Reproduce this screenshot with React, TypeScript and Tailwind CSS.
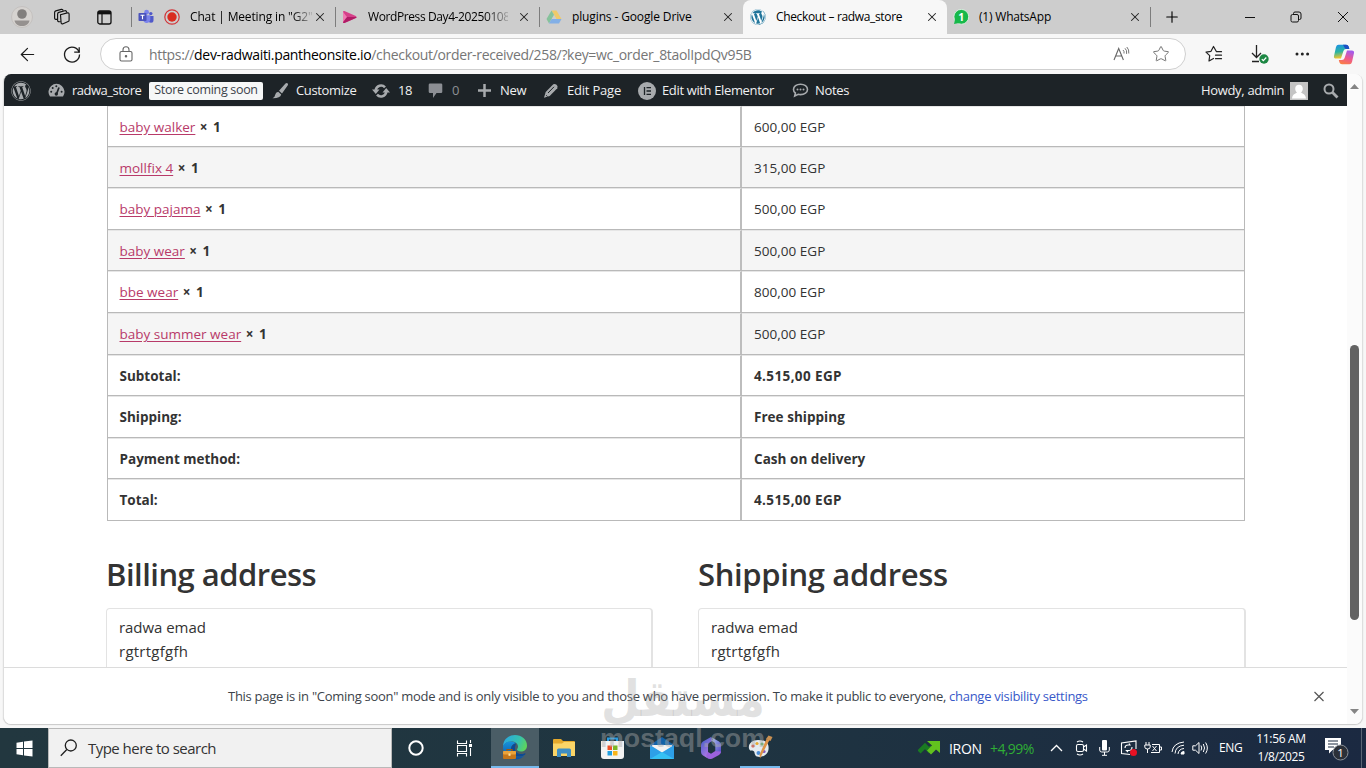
import type { ReactNode } from "react";
import { FaWordpress } from "react-icons/fa";
import { Star, X, Plus, ArrowLeft } from "lucide-react";

const products = [
  { name: "baby walker", price: "600,00 EGP", h: "h-[41px]", bg: "bg-white" },
  { name: "mollfix 4", price: "315,00 EGP", h: "h-[41px]", bg: "bg-[#f5f5f5]" },
  { name: "baby pajama", price: "500,00 EGP", h: "h-[42px]", bg: "bg-white" },
  { name: "baby wear", price: "500,00 EGP", h: "h-[41px]", bg: "bg-[#f5f5f5]" },
  { name: "bbe wear", price: "800,00 EGP", h: "h-[42px]", bg: "bg-white" },
  { name: "baby summer wear", price: "500,00 EGP", h: "h-[42px]", bg: "bg-[#f5f5f5]" },
];

const totals = [
  { label: "Subtotal:", value: "4.515,00 EGP", h: "h-[41px]", spacing: "tracking-[0.38px]" },
  { label: "Shipping:", value: "Free shipping", h: "h-[42px]", spacing: "tracking-[0.03px]" },
  { label: "Payment method:", value: "Cash on delivery", h: "h-[41px]", spacing: "tracking-[0.03px]" },
  { label: "Total:", value: "4.515,00 EGP", h: "h-[42px]", spacing: "tracking-[0.38px]" },
];

const TeamsIcon = () => (
  <svg width="16" height="16" viewBox="0 0 16 16">
    <circle cx="12.8" cy="4.6" r="1.7" fill="#5059c9" />
    <circle cx="8.6" cy="3.2" r="2.4" fill="#7b83eb" />
    <path d="M10.5 7h5v4.2a2.5 2.5 0 0 1-5 0z" fill="#5059c9" />
    <path d="M5 6.2h7.3v4.6a3.7 3.7 0 0 1-7.3 0z" fill="#7b83eb" />
    <rect x="0.5" y="4" width="8" height="8" rx="0.8" fill="#4b53bc" />
    <path d="M2.5 6.2h4M4.5 6.2v4" stroke="#fff" strokeWidth="1.1" />
  </svg>
);

const RecordIcon = () => (
  <svg width="16" height="16" viewBox="0 0 16 16">
    <circle cx="8" cy="8" r="7.2" fill="none" stroke="#d13438" strokeWidth="1.2" />
    <circle cx="8" cy="8" r="4.7" fill="#d92c20" />
  </svg>
);

const StreamIcon = () => (
  <svg width="16" height="16" viewBox="0 0 16 16">
    <path d="M1 3Q1 1.600 2.400 2L13.800 6.900Q15.500 8 13.800 9.100L2.400 14Q1 14.400 1 13L3 8z" fill="#d6408a" />
    <path d="M1 13L3 8h11.700q0 .6-.9 1.100L2.400 14Q1 14.400 1 13z" fill="#b01c66" />
    <path d="M1 3v10L5 8z" fill="#f07ab2" />
  </svg>
);

const DriveIcon = () => (
  <svg width="16" height="16" viewBox="0 0 16 16" opacity="0.75">
    <path d="M5.5 1.5h5L15.5 10h-5z" fill="#fbc94a" />
    <path d="M5.5 1.5L8 5.8 3 14.5.5 10z" fill="#6fbf8b" />
    <path d="M5.5 10h10L13 14.5H3z" fill="#6aa5ef" />
  </svg>
);

const WhatsAppIcon = () => (
  <svg width="16" height="16" viewBox="0 0 16 16">
    <circle cx="8.3" cy="7.8" r="7.4" fill="#17b84a" stroke="#e7f6ea" strokeWidth="0.8" />
    <path d="M1 15l1.2-5L6 14z" fill="#17b84a" />
    <text x="8.3" y="11.8" fontSize="10.5" fontWeight="700" fontFamily="Open Sans, sans-serif" textAnchor="middle" fill="#fff">1</text>
  </svg>
);

const CopilotIcon = () => (
  <svg width="22" height="21" viewBox="0 0 22 21">
    <defs>
      <linearGradient id="cpA" x1="0" y1="0" x2="0.2" y2="1">
        <stop offset="0" stopColor="#1a8fe8" />
        <stop offset="0.55" stopColor="#2cb5a0" />
        <stop offset="1" stopColor="#f4c52c" />
      </linearGradient>
      <linearGradient id="cpB" x1="0.6" y1="0" x2="0.2" y2="1">
        <stop offset="0" stopColor="#a45bea" />
        <stop offset="0.5" stopColor="#ee5a8d" />
        <stop offset="1" stopColor="#fb8040" />
      </linearGradient>
    </defs>
    <path d="M5.5.8H13q2 0 2.600 2L16.200 5H13q-2 0-2.600 2L8 14.500H3.200q-2.700 0-2.200-2.600L3 3Q3.600.8 5.500.8z" fill="url(#cpA)" />
    <path d="M10 .8h3.200q2 0 2.600 2L16.400 5h-2.600q-2 0-2.300-1.500z" fill="#1c4fc4" />
    <path d="M16.500 20.200H9q-2 0-2.600-2L5.800 16H9q2 0 2.600-2L14 6.500h4.800q2.700 0 2.200 2.600L19 18q-.6 2.200-2.500 2.200z" fill="url(#cpB)" />
  </svg>
);

const EdgeIcon = () => (
  <svg width="26" height="26" viewBox="0 0 26 26">
    <defs>
      <linearGradient id="edA" x1="0" y1="0.3" x2="1" y2="0.6">
        <stop offset="0" stopColor="#2aa8e0" />
        <stop offset="0.6" stopColor="#35c1b0" />
        <stop offset="1" stopColor="#5fd65a" />
      </linearGradient>
      <linearGradient id="edB" x1="0" y1="0" x2="0" y2="1">
        <stop offset="0" stopColor="#1793dc" />
        <stop offset="1" stopColor="#0e4f9e" />
      </linearGradient>
    </defs>
    <path d="M1 13C1 5.500 6.500 1 13 1s12 4.600 12 10.400c0 4-3 6-6 6-2.500 0-4-.9-4-1.800 0-.7 1-1 1-3.100C16 9.500 13 7.500 9.500 7.500 5 7.500 1.600 10 1 13z" fill="url(#edA)" />
    <path d="M1 13c.5-3.500 4-5.500 8-5.500 2 0 4 .8 5 2-3 0-5 2.500-5 5.500 0 5 5 8.500 10 7.500 1.500-.3 3-1 3.700-1.300C20.500 24 17 25.500 13 25.500 6 25.500 1 20 1 13z" fill="url(#edB)" />
    <path d="M9 15c0 4.500 4 7.500 8.500 7.500 2.500 0 5-1.200 5.800-2.200.4-.6-.1-1.200-.8-.9-4.500 1.800-9.500-.5-9.500-5 0-1.500.5-3 1-4.900C11.500 9.500 9 12 9 15z" fill="#0b4a94" />
    <rect x="1" y="17" width="13" height="8" rx="1" fill="#c5761a" />
    <rect x="1" y="17" width="13" height="3.600" rx="1" fill="#e9a23b" />
    <path d="M5 17v-1.500h5V17" fill="none" stroke="#9c5710" strokeWidth="1.200" />
    <rect x="6.500" y="19.500" width="2" height="2.300" fill="#ffe3a0" />
  </svg>
);

const Close = () => <X size={14} strokeWidth={1.800} className="shrink-0 text-[#222]" />;

type TabProps = { icon: ReactNode; title: string; textClass: string };

const Tab = ({ icon, title, textClass }: TabProps) => (
  <div className="flex h-[34px] w-[204px] shrink-0 items-center">
    {icon}
    <span className={`min-w-0 flex-1 text-[12px] whitespace-nowrap ${textClass}`}>{title}</span>
    <div className="flex w-[32px] shrink-0 justify-center">
      <Close />
    </div>
  </div>
);

const Sep = () => <div className="-ml-px h-5 w-px shrink-0 bg-[#7d7d7d]" />;

const TabBar = () => (
  <div className="flex h-[34px] items-center bg-[#cdcdcd] text-black">
    <div className="flex w-[132px] shrink-0 items-center pl-[11px]">
      <svg width="22" height="22" viewBox="0 0 22 22">
        <circle cx="11" cy="11" r="10.500" fill="#d6d3d0" stroke="#bebab7" strokeWidth="0.7" />
        <circle cx="11" cy="8" r="4.800" fill="#827f7d" />
        <path d="M3.500 14.500h15c-.5 3.500-3.500 5.500-7.500 5.500s-7-2-7.500-5.500z" fill="#95918f" />
      </svg>
      <svg className="ml-[20px]" width="18" height="18" viewBox="0 0 18 18" fill="none" stroke="#111" strokeWidth="1.150">
        <path d="M7.500 6.800l6.800-1.900q1.700-.3 1.800 1.300v6q0 1-1 1.300l-5 2.200q-1.800.7-2-1z" />
        <path d="M7.600 13.500q-3 .8-3-1.200V6q0-1.200 1.200-1.600l6-1.700q1.500-.3 2 1.800" />
        <path d="M4.600 11.200q-3 .8-3-1.200V4.500q0-1.200 1.200-1.600l5.500-1.500q1.500-.3 2 1.200" />
      </svg>
      <svg className="ml-[26px]" width="15" height="15" viewBox="0 0 15 15" fill="none" stroke="#111">
        <rect x="0.800" y="0.800" width="13.200" height="13.200" rx="2" strokeWidth="1.300" />
        <path d="M1 2.700h13" strokeWidth="3.300" />
        <path d="M5 3v11" strokeWidth="1.200" />
      </svg>
    </div>
    <Sep />
    <div className="flex w-[204px] shrink-0 items-center pl-[6px]">
      <TeamsIcon />
      <span className="ml-[10px]"><RecordIcon /></span>
      <span className="ml-[10px] w-[123px] shrink-0 bg-linear-to-r from-black from-80% to-[#bbb] bg-clip-text text-[12px] tracking-[-0.15px] whitespace-nowrap text-transparent">Chat | Meeting in "G2"</span>
      <Close />
    </div>
    <Sep />
    <Tab
      icon={<span className="ml-[6px]"><StreamIcon /></span>}
      title="WordPress Day4-20250108"
      textClass="ml-[10px] tracking-[-0.4px] bg-linear-to-r from-black from-80% to-[#aaa] bg-clip-text text-transparent"
    />
    <Sep />
    <Tab icon={<span className="ml-[6px]"><DriveIcon /></span>} title="plugins - Google Drive" textClass="ml-[10px] tracking-[-0.13px]" />
    <div className="-ml-px flex h-[34px] w-[204px] shrink-0 items-center rounded-t-lg bg-[#f7f7f7]">
      <span className="ml-[7px] flex size-4 items-center justify-center rounded-full bg-white">
        <FaWordpress size={16} color="#21759b" />
      </span>
      <span className="ml-[10px] flex-1 text-[12px] tracking-[-0.35px] whitespace-nowrap">Checkout – radwa_store</span>
      <div className="flex w-[31px] justify-center"><Close /></div>
    </div>
    <Tab icon={<span className="ml-[6px]"><WhatsAppIcon /></span>} title="(1) WhatsApp" textClass="ml-[10px] tracking-[-0.2px]" />
    <Sep />
    <div className="flex flex-1 items-center pl-[12px]">
      <Plus size={18} strokeWidth={1.500} />
      <svg className="ml-[64px]" width="10" height="10"><path d="M0 5.500h10" stroke="#111" /></svg>
      <svg className="ml-[35px]" width="12" height="12" viewBox="0 0 12 12" fill="none" stroke="#111">
        <rect x="1" y="3.500" width="7.500" height="7.500" rx="1.500" />
        <path d="M3.500 3V2.500q0-1.500 1.500-1.500h4q2 0 2 2v4q0 1.500-1.500 1.500H9" />
      </svg>
      <svg className="ml-[35px]" width="12" height="12"><path d="M1 1l10 10M11 1L1 11" stroke="#111" /></svg>
    </div>
  </div>
);

const Toolbar = () => (
  <div className="flex h-10 items-center bg-[#f7f7f7]">
    <div className="flex w-[100px] shrink-0 items-center pl-[17px] text-[#1b1b1b]">
      <ArrowLeft size={21} strokeWidth={1.400} />
      <svg className="ml-[24px]" width="20" height="20" viewBox="0 0 20 20" fill="none" stroke="#1b1b1b" strokeWidth="1.300">
        <path d="M17.200 8.500A7.500 7.500 0 1 0 17.500 10.500" />
        <path d="M17.200 3.200v5h-5" />
      </svg>
    </div>
    <div className="flex h-8 w-[1086px] shrink-0 items-center rounded-full border border-[#cfcfcf] bg-white pl-[18px]">
      <svg width="14" height="16" viewBox="0 0 14 16" fill="none" stroke="#666" strokeWidth="1.100">
        <rect x="1" y="5.500" width="12" height="9.500" rx="1.500" />
        <path d="M4 5.500V3.700a3 3 0 0 1 6 0v1.800" />
        <circle cx="7" cy="10.200" r="0.700" fill="#666" />
      </svg>
      <span className="ml-[16px] w-[960px] text-[14px] tracking-[-0.33px] whitespace-nowrap text-[#767676]">
        https://<span className="text-black">dev-radwaiti.pantheonsite.io</span>/checkout/order-received/258/?key=wc_order_8taolIpdQv95B
      </span>
      <svg className="ml-[4px]" width="17" height="16" viewBox="0 0 17 16" fill="none" stroke="#666" strokeWidth="1.100">
        <path d="M1 14L5.700 2.500 10.400 14M2.600 10h6.200" />
        <path d="M10 4q1.500 1.200 1 3.500M12 2.300q2.200 2 1.600 5.600M13.800 1q2.500 2.500 2 6.500" strokeWidth="0.900" />
      </svg>
      <Star size={18} strokeWidth={1.200} className="ml-[22px] text-[#666]" />
    </div>
    <svg className="ml-[19px] shrink-0" width="18" height="18" viewBox="0 0 18 18" fill="none" stroke="#222" strokeWidth="1.200" strokeLinejoin="round" strokeLinecap="round">
      <path d="M16.500 6.700h-5L8.500 1.500 6 6.300l-5 .8 3.700 3.500L4 16l4.500-2.500M10.500 10.200h6M10.500 13.700h6" />
    </svg>
    <svg className="ml-[28px] shrink-0" width="20" height="20" viewBox="0 0 20 20" fill="none">
      <path d="M5.500 1v12M1 9l4.500 4.500L10 9M1 17.500h7" stroke="#222" strokeWidth="1.300" />
      <circle cx="13" cy="15" r="4.700" fill="#1c8743" />
      <path d="M10.800 15.200l1.500 1.500 3-3.200" stroke="#fff" strokeWidth="1.200" />
    </svg>
    <svg className="ml-[24px] shrink-0" width="15" height="4" fill="#222">
      <circle cx="2" cy="2" r="1.500" /><circle cx="7.300" cy="2" r="1.500" /><circle cx="12.600" cy="2" r="1.500" />
    </svg>
    <span className="ml-[23px] shrink-0"><CopilotIcon /></span>
  </div>
);

const AdminBar = () => (
  <div className="flex h-8 w-[1343px] items-center bg-[#1d2327] pt-px text-[13px] whitespace-nowrap text-[#f0f0f1]">
    <div className="flex w-[40px] shrink-0 pl-[7px]"><FaWordpress size={20} color="#a7aaad" /></div>
    <div className="flex w-[28px] shrink-0 pl-[4px]">
      <svg width="17" height="17" viewBox="0 0 17 17">
        <path d="M2 14.500A8 8 0 1 1 15 14.500z" fill="#a7aaad" />
        <path d="M8.500 12L11 5.500" stroke="#1d2327" strokeWidth="1.700" />
        <circle cx="8.300" cy="12" r="1.700" fill="#1d2327" />
        <g fill="#1d2327">
          <circle cx="3.200" cy="9.800" r="1" /><circle cx="4.700" cy="6" r="1" /><circle cx="8.300" cy="4.200" r="1" /><circle cx="13.600" cy="9.800" r="1" />
        </g>
      </svg>
    </div>
    <span className="w-[77px] shrink-0 tracking-[-0.5px]">radwa_store</span>
    <div className="flex h-[18px] w-[114px] shrink-0 items-center justify-center rounded-[2px] bg-[#f6f7f7] text-[12.500px] tracking-[-0.32px] text-[#3c434a]">Store coming soon</div>
    <div className="flex w-[33px] shrink-0 pl-[8px]">
      <svg width="18" height="18" viewBox="0 0 18 18" fill="#a7aaad">
        <path d="M16.500 1.200q1 .8.3 2L11 11.500 8 8.800l6.500-7.300q1-1 2-.3zM7.200 9.700l3 2.700q-1 4-8.700 3.800 2.500-1.200 2.700-3.500.4-2.500 3-3z" />
      </svg>
    </div>
    <span className="w-[76px] shrink-0 tracking-[-0.35px]">Customize</span>
    <div className="flex w-[26px] shrink-0">
      <svg width="18" height="16" viewBox="0 0 18 16" fill="none" stroke="#a7aaad" strokeWidth="2.600">
        <path d="M3.700 7A5.400 5.400 0 0 1 13 4.300M14.300 9A5.400 5.400 0 0 1 5 11.700" />
        <path d="M0 6.500h7.500L3.800 11zM18 9.500h-7.500L14.200 5z" fill="#a7aaad" stroke="none" />
      </svg>
    </div>
    <span className="w-[30px] shrink-0 tracking-[-0.5px]">18</span>
    <div className="flex w-[24px] shrink-0">
      <svg width="15" height="17" viewBox="0 0 15 17"><path d="M2 1.500h11q1.300 0 1.300 1.300v7q0 1.200-1.300 1.200H8.500L5 16v-5H2Q.7 11 .7 9.800v-7Q.7 1.500 2 1.500z" fill="#8c8f94" /></svg>
    </div>
    <span className="w-[25px] shrink-0 text-[#8c8f94]">0</span>
    <div className="flex w-[23px] shrink-0">
      <svg width="15" height="15"><path d="M7.500 1v13M1 7.500h13" stroke="#a7aaad" strokeWidth="2.500" /></svg>
    </div>
    <span className="w-[43px] shrink-0 tracking-[-0.3px]">New</span>
    <div className="flex w-[24px] shrink-0">
      <svg width="16" height="16" viewBox="0 0 16 16" fill="#a7aaad">
        <path d="M10.300 1.300q1.500-1 3.200.5t.8 3.400L6.700 13 1 14.800 2.700 9z" />
        <path d="M5 10l6-6.200M3.200 12.300l1.300 1.200" stroke="#1d2327" strokeWidth="1" />
      </svg>
    </div>
    <span className="w-[71px] shrink-0 tracking-[-0.2px]">Edit Page</span>
    <div className="flex w-[24px] shrink-0">
      <svg width="18" height="18" viewBox="0 0 18 18">
        <circle cx="9" cy="9" r="9" fill="#a7aaad" />
        <path d="M6.500 5v8M8.500 5.700H13M8.500 9H13M8.500 12.300H13" stroke="#1d2327" strokeWidth="1.300" />
      </svg>
    </div>
    <span className="w-[130px] shrink-0 tracking-[-0.36px]">Edit with Elementor</span>
    <div className="flex w-[23px] shrink-0">
      <svg width="17" height="15" viewBox="0 0 17 15">
        <path d="M8.500 1.200c4 0 7 2.200 7 5.200s-3 5.200-7 5.200q-1.200 0-2.300-.3L2.700 13l.7-3Q1.500 8.600 1.500 6.400c0-3 3-5.200 7-5.200z" fill="none" stroke="#a7aaad" strokeWidth="1.600" />
        <g fill="#a7aaad"><circle cx="5.500" cy="6.500" r="1" /><circle cx="8.500" cy="6.500" r="1" /><circle cx="11.500" cy="6.500" r="1" /></g>
      </svg>
    </div>
    <span className="flex-1 tracking-[-0.3px]">Notes</span>
    <span className="w-[89px] shrink-0 tracking-[-0.33px]">Howdy, admin</span>
    <svg width="18" height="18" viewBox="0 0 18 18" className="shrink-0">
      <rect width="18" height="18" fill="#c4c4c4" />
      <path d="M9 2.800c2.300 0 3.800 1.600 3.800 3.900 0 1.500-.7 2.800-1.700 3.600.2 1.500 4.300 1 4.900 6.200H2c.6-5.200 4.700-4.700 4.900-6.200-1-.8-1.700-2.100-1.700-3.600 0-2.300 1.500-3.900 3.800-3.900z" fill="#fff" />
    </svg>
    <svg className="mr-[8px] ml-[15px] shrink-0" width="16" height="16" viewBox="0 0 16 16" fill="none" stroke="#a7aaad">
      <circle cx="6" cy="6" r="4.500" strokeWidth="2" />
      <path d="M9.300 9.300l5.200 5.200" strokeWidth="2.800" />
    </svg>
  </div>
);

type AddressProps = { title: string; className: string; titleClass: string };

const Address = ({ title, className, titleClass }: AddressProps) => (
  <div className={className}>
    <h2 className={`h-[55px] text-[31px] leading-[42px] font-semibold whitespace-nowrap text-[#333] ${titleClass}`}>{title}</h2>
    <div className="h-[80px] rounded-t-[4px] border border-r-2 border-[#e3e3e3] pt-[6px] pl-3 text-[15px] leading-6 text-[#333]">
      <div className="tracking-[-0.05px]">radwa emad</div>
      <div className="tracking-[0.25px]">rgtrtgfgfh</div>
    </div>
  </div>
);

const Scrollbar = () => (
  <div className="flex w-[15px] shrink-0 flex-col items-center bg-[#fbfbfb]">
    <svg className="mt-[10px]" width="9" height="5"><path d="M0 5L4.500 0 9 5z" fill="#858585" /></svg>
    <div className="mt-[256px] h-[275px] w-[9px] rounded-full bg-[#636363]" />
    <svg className="mt-[89px]" width="9" height="5"><path d="M0 0h9L4.500 5z" fill="#858585" /></svg>
  </div>
);

const OrderPage = () => (
  <div className="h-[561px] overflow-hidden pl-[103px]">
    <div className="w-[1138px] border-x border-[#b9b9b9] text-[13.500px] text-[#333]">
      {products.map((p) => (
        <div key={p.name} className={`flex border-b border-[#b9b9b9] ${p.h} ${p.bg}`}>
          <div className="flex w-[634px] items-center border-t border-r-2 border-r-[#bdbdbd] border-t-[#e6e6e6] pt-px pl-[11.500px] whitespace-pre">
            <span className="text-[#b83a69] underline underline-offset-2">{p.name}</span>
            <b className="tracking-[1px]"> × 1</b>
          </div>
          <div className="flex flex-1 items-center border-t border-[#e6e6e6] pt-px pl-[12px] tracking-[0.03px]">{p.price}</div>
        </div>
      ))}
      {totals.map((t) => (
        <div key={t.label} className={`flex border-b border-[#b9b9b9] bg-white font-bold ${t.h}`}>
          <div className="flex w-[634px] items-center border-t border-r-2 border-r-[#bdbdbd] border-t-[#e6e6e6] pt-px pl-[11.500px]">{t.label}</div>
          <div className={`flex flex-1 items-center border-t border-[#e6e6e6] pt-px pl-[12px] ${t.spacing}`}>{t.value}</div>
        </div>
      ))}
    </div>
    <div className="mt-[32px] flex pl-px">
      <Address title="Billing address" className="-ml-[2px] w-[547px]" titleClass="tracking-[-0.52px]" />
      <Address title="Shipping address" className="ml-[45px] w-[548px]" titleClass="tracking-[-0.36px]" />
    </div>
  </div>
);

const NoticeBar = () => (
  <div className="flex h-[57px] items-center border-t border-[#dcdcdc] bg-white pt-px text-[13px] whitespace-nowrap text-[#3c434a]">
    <p className="ml-[224px] w-[1085px] tracking-[-0.28px]">
      This page is in "Coming soon" mode and is only visible to you and those who have permission. To make it public to everyone, <span className="text-[#3858c9]">change visibility settings</span>
    </p>
    <svg width="12" height="12"><path d="M1.500 1l9 9M10.500 1l-9 9" stroke="#555" strokeWidth="1.200" /></svg>
  </div>
);

const Watermark = () => (
  <div className="pointer-events-none absolute top-[672px] left-[598px]">
    <svg width="172" height="88" viewBox="0 0 172 88" fill="#969696" fillOpacity="0.28">
      <text x="3" y="44" direction="ltr" textLength="164" lengthAdjust="spacingAndGlyphs" fontFamily="DejaVu Sans" fontWeight="700" fontSize="50">مستقل</text>
      <text x="2" y="75" textLength="165" lengthAdjust="spacingAndGlyphs" fontFamily="Liberation Sans" fontWeight="700" fontSize="25" fill="#a9a9a9" fillOpacity="0.45">mostaql.com</text>
    </svg>
  </div>
);

const Taskbar = () => (
  <div className="flex h-10 items-center bg-linear-to-r from-[#22373f] via-[#1f3541] to-[#1b2941] text-white">
    <div className="flex h-10 w-12 shrink-0 items-center justify-center">
      <svg width="17" height="17" viewBox="0 0 17 17" fill="#fff"><path d="M.5 2.700L7 1.800v6.200H.5zM8 1.600L16.500.5V8H8zM.5 9H7v6.200l-6.500-.9zM8 9h8.500v7.500L8 15.400z" /></svg>
    </div>
    <div className="flex h-10 w-[344px] shrink-0 items-center border border-[#b9b9b9] bg-[#f1f1f1] pl-[11px]">
      <svg width="18" height="18" viewBox="0 0 18 18" fill="none" stroke="#1f1f1f" strokeWidth="1.300"><circle cx="10.800" cy="6.500" r="5.500" /><path d="M6.800 10.500L.8 16.700" /></svg>
      <span className="ml-[10px] text-[15px] tracking-[-0.53px] text-[#333]">Type here to search</span>
    </div>
    <div className="flex w-12 shrink-0 justify-center">
      <svg width="18" height="18"><circle cx="9" cy="9" r="6.700" fill="none" stroke="#fff" strokeWidth="2" /></svg>
    </div>
    <div className="flex w-[51px] shrink-0 pl-[16px]">
      <svg width="17" height="17" viewBox="0 0 17 17" fill="none" stroke="#fff">
        <path d="M1.500.5v3h9v-3M1.500 5.500h9v6h-9zM1.500 16.500v-3h9v3M14.500 0v3M14.500 8v8" strokeWidth="1.100" />
        <rect x="13" y="4" width="3" height="3" fill="#fff" stroke="none" />
      </svg>
    </div>
    <div className="flex h-10 w-12 shrink-0 items-center justify-center border-b-2 border-[#76b9ed] bg-[#4a5d66]"><EdgeIcon /></div>
    <div className="flex w-[49px] shrink-0 justify-center">
      <svg width="22" height="20" viewBox="0 0 22 20">
        <path d="M0 2q0-1 1-1h7l2 2h11q1 0 1 1v4H0z" fill="#e5a92c" />
        <path d="M0 5.500h9L11 4h11v14H0z" fill="#fbd567" />
        <path d="M4 19v-7q0-1.500 1.500-1.500h11Q18 10.500 18 12v7h-4v-3.500H8V19z" fill="#3f8fc4" />
      </svg>
    </div>
    <div className="flex w-[49px] shrink-0 justify-center">
      <svg width="23" height="24" viewBox="0 0 23 24">
        <path d="M7 6V2.500h9V6" fill="none" stroke="#2a9be0" strokeWidth="2" />
        <path d="M0 5h23v15q0 3-3 3H3q-3 0-3-3z" fill="#f3f3f3" />
        <path d="M6.500 9.500h4.500V14H6.500z" fill="#ee5027" /><path d="M12 9.500h4.500V14H12z" fill="#7cb726" />
        <path d="M6.500 15h4.500v4.500H6.500z" fill="#209fe0" /><path d="M12 15h4.500v4.500H12z" fill="#f9b51b" />
      </svg>
    </div>
    <div className="flex w-[49px] shrink-0 justify-center">
      <svg width="24" height="23" viewBox="0 0 24 23">
        <path d="M0 8L12 0l12 8v5H0z" fill="#1262a8" />
        <path d="M2 8h20v8H2z" fill="#f2f2f2" />
        <path d="M0 8l12 7.500L24 8v14H0z" fill="#2d9fe8" />
        <path d="M0 22l12-7 12 7z" fill="#35c0f4" />
      </svg>
    </div>
    <div className="flex w-[50px] shrink-0 justify-center">
      <svg width="22" height="24" viewBox="0 0 22 24">
        <defs>
          <linearGradient id="ofA" x1="0" y1="0" x2="0.6" y2="1"><stop offset="0" stopColor="#3a5cc8" /><stop offset="1" stopColor="#b97be8" /></linearGradient>
          <linearGradient id="ofB" x1="0" y1="0" x2="1" y2="1"><stop offset="0" stopColor="#a9c8f7" /><stop offset="1" stopColor="#5547c4" /></linearGradient>
        </defs>
        <path d="M11 1L3 5.500Q1 6.800 1 9v7q0 2.400 2 3.600l4.500 2.600q-1.500-3 .5-5V9q0-1.500 1.300-2.200L12 5q.5-2.500-1-4z" fill="url(#ofA)" />
        <path d="M11 1q2.500 1.500 1 4l2 1.200q1.300.8 1.300 2.300V15l5.700 2V9q0-2.200-2-3.500z" fill="url(#ofB)" />
        <path d="M7 21.800q2 2.200 5.500.7l6.500-3.600q2-1.200 2-3.400l-5.700-.5-4.300 2.700-3-1.700q-2.500 2-1 5.800z" fill="#9b62dd" />
      </svg>
    </div>
    <div className="ml-1 flex h-10 w-10 shrink-0 items-center justify-center border-b-2 border-[#76b9ed]">
      <svg width="25" height="24" viewBox="0 0 25 24">
        <path d="M10 5C4 5 0 9 1 13.500c.8 3 3 2 4.500 2.500s.5 2.500 2 4.500c2.500 3 12 1.500 13-6S16 5 10 5z" fill="#e4ebf0" />
        <circle cx="5" cy="11" r="1.600" fill="#dd4f3e" /><circle cx="9" cy="8.500" r="1.600" fill="#e7aa30" /><circle cx="14" cy="9" r="1.600" fill="#5bb05b" /><circle cx="10.500" cy="18" r="2" fill="#4b8dd6" /><circle cx="16" cy="16.500" r="1.600" fill="#8458bd" />
        <path d="M21.500 5L14 19.500l-2 4-.5-3.800L18.500 4z" fill="#df9448" />
        <path d="M18 4l2.500-3.500 4 1.500L22.500 6z" fill="#c99052" />
      </svg>
    </div>
    <div className="flex min-w-0 flex-1 items-center">
      <svg className="ml-[138px] shrink-0" width="23" height="16" viewBox="0 0 23 16">
        <path d="M1 12l6-6 4 4 3-3" fill="none" stroke="#1a7a22" strokeWidth="4.500" />
        <path d="M9 1h13v12l-4-3.500-5 5-4-4 5-5z" fill="#62c21e" />
      </svg>
      <span className="ml-[8px] w-[41px] shrink-0 text-[14px] tracking-[-0.3px]">IRON</span>
      <span className="w-[60px] shrink-0 text-[14px] tracking-[-0.6px] text-[#2fae35]">+4,99%</span>
      <svg className="shrink-0" width="13" height="8"><path d="M1 7l5.500-5.500L12 7" fill="none" stroke="#fff" strokeWidth="1.300" /></svg>
      <svg className="ml-[12px] shrink-0" width="13" height="16" viewBox="0 0 13 16" fill="none" stroke="#fff" strokeWidth="1.100"><rect x="1.500" y="4.500" width="7" height="7" rx="1.500" /><path d="M8.500 7l3-2v6l-3-2M2 2q3-2 6 0M2 14q3 2 6 0" /></svg>
      <svg className="ml-[11px] shrink-0" width="11" height="16" viewBox="0 0 11 16" fill="none" stroke="#fff"><rect x="3" y="0" width="5" height="10.500" rx="1" fill="#fff" stroke="none" /><path d="M.7 7v3q0 2 2 2h5.600q2 0 2-2V7M5.500 12v3M3 15.300h5" /></svg>
      <svg className="ml-[10px] shrink-0" width="18" height="17" viewBox="0 0 18 17" fill="none" stroke="#fff" strokeWidth="1.100"><path d="M10 14.500L1.500 13.500V3L16 1v8M5 8q0-3 3-3h2l-1-1.500M12 7q0 4-4 3.500H6.500L8 12" /><circle cx="13.500" cy="12.500" r="3.500" fill="#e81123" stroke="none" /></svg>
      <svg className="ml-[6px] shrink-0" width="18" height="12" viewBox="0 0 18 12" fill="none" stroke="#fff"><path d="M2 0v3M5 0v3M.8 3h5.400v2q0 2-2.700 2T.8 5zM3.500 7v4M8 2.500h7.500v8H7M16 5h1.500v3H16M8.500 4l4 5M12.500 4l-4 5" /></svg>
      <svg className="ml-[9px] shrink-0" width="14" height="14" viewBox="0 0 14 14" fill="none" stroke="#fff"><path d="M1 11Q2 2 13 1M4 12.500Q4.500 5 13 4.200M7 13q.5-5 6-5.500" /><path d="M10 13q0-2.500 3-2.500V13z" fill="#fff" /></svg>
      <svg className="ml-[7px] shrink-0" width="17" height="14" viewBox="0 0 17 14" fill="none" stroke="#fff"><path d="M.8 4.800H3.500L7 1.500v11L3.500 9.200H.8zM9 4.500q1.500 2.500 0 5M11.300 3q2.500 4 0 8M13.600 1.500q3.500 5.500 0 11" /></svg>
      <span className="ml-[10px] w-[30px] shrink-0 text-[12px] tracking-[-0.3px]">ENG</span>
      <div className="w-[64px] shrink-0 text-center text-[12px] leading-[18px] tracking-[-0.35px] whitespace-nowrap">
        <div>11:56 AM</div>
        <div>1/8/2025</div>
      </div>
      <svg className="ml-[11px] shrink-0" width="26" height="26" viewBox="0 0 26 26">
        <path d="M1 3h16v12H8.500L5 18.500V15H1z" fill="#fff" />
        <path d="M4 6h10M4 9h10M4 12h6" stroke="#1b2b41" strokeWidth="1.200" />
        <circle cx="16.500" cy="17.500" r="7.500" fill="#2b3038" stroke="#8a9097" />
        <text x="16.500" y="21.700" fontSize="11.500" fontFamily="Open Sans, sans-serif" textAnchor="middle" fill="#fff">1</text>
      </svg>
      <div className="mr-[4px] ml-auto h-10 w-px bg-[#596574]" />
    </div>
  </div>
);

const App = () => {
  return (
    <div className="relative h-[768px] w-[1366px] overflow-hidden bg-[#f7f7f7] font-['Open_Sans','Noto_Sans',sans-serif]">
      <TabBar />
      <Toolbar />
      <div className="mb-[4px] ml-[3px] flex h-[650px] w-[1360px] overflow-hidden rounded-lg border-x border-[#dedede] bg-white shadow-[0_1px_1px_#c8c8c8]">
        <div className="w-[1343px] shrink-0">
          <AdminBar />
          <OrderPage />
          <NoticeBar />
        </div>
        <Scrollbar />
      </div>
      <Taskbar />
      <Watermark />
    </div>
  );
};

export default App;
